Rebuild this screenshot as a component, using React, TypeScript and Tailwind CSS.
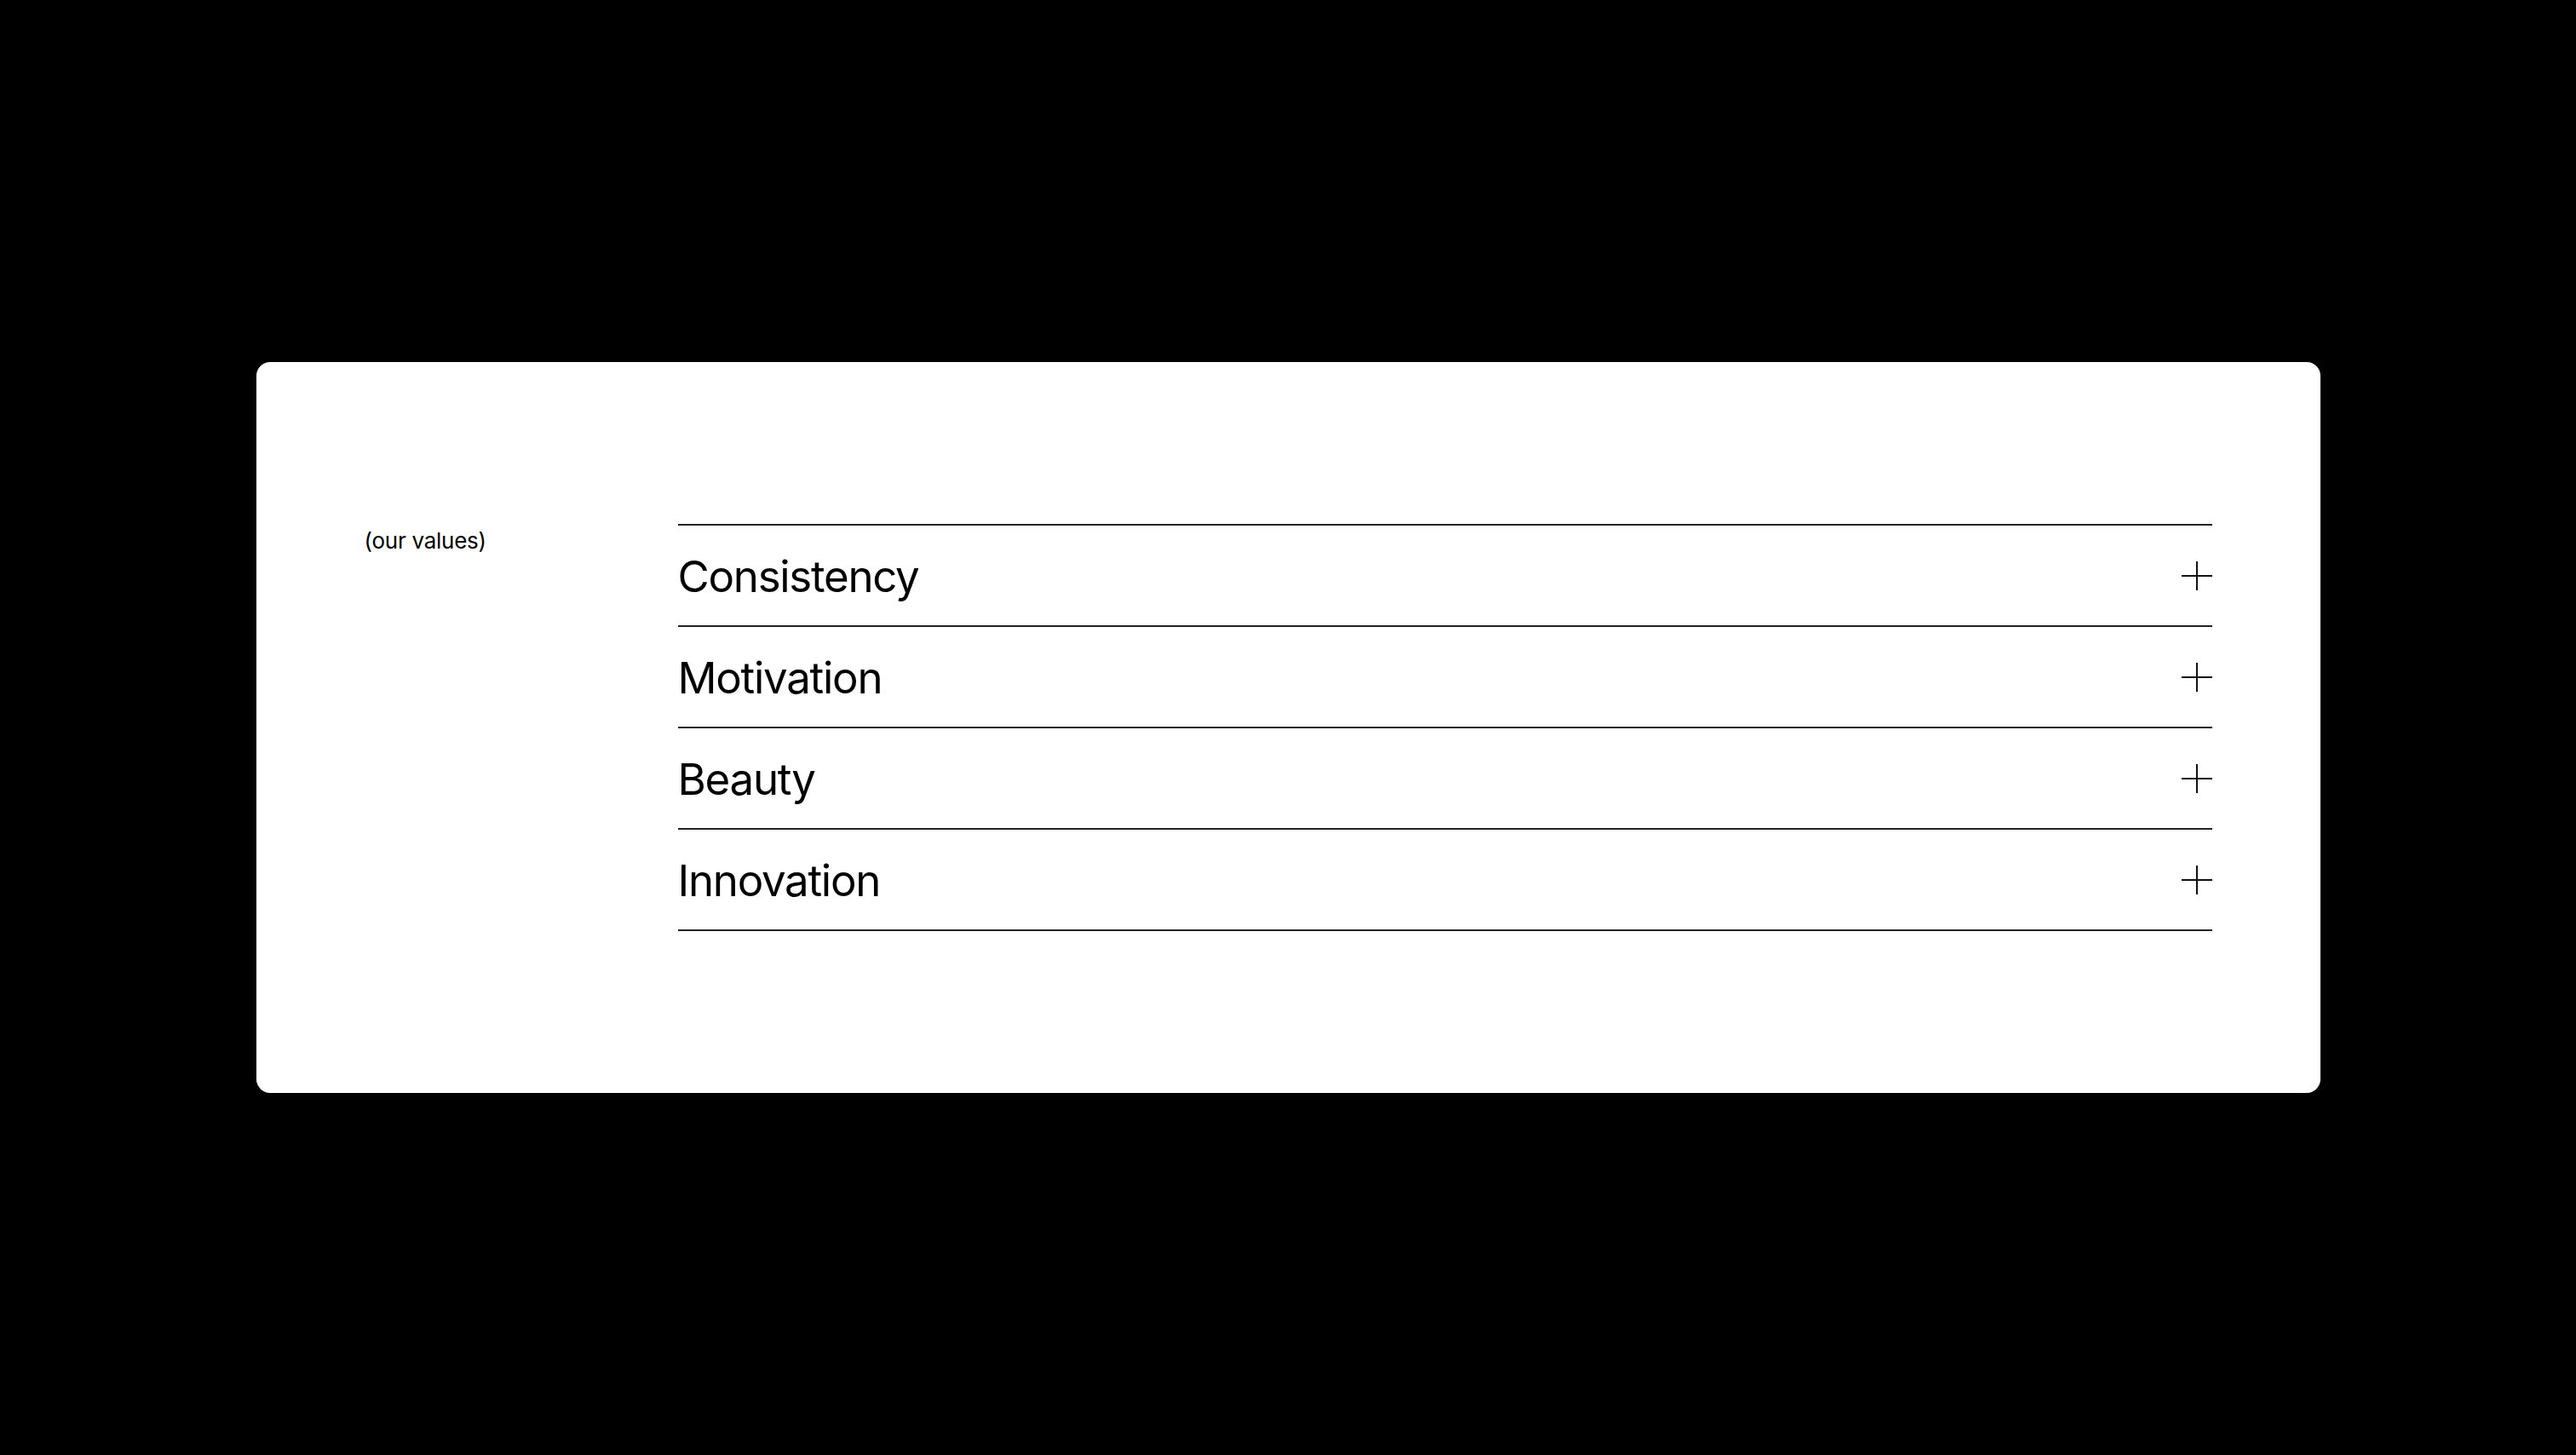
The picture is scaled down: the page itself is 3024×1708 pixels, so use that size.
import React from 'react';

const values = ['Consistency', 'Motivation', 'Beauty', 'Innovation'];

const PlusIcon = () => (
  <svg width="36" height="34" viewBox="0 0 36 34" fill="none" stroke="#111" strokeWidth="2">
    <line x1="0" y1="17" x2="36" y2="17" />
    <line x1="18" y1="0" x2="18" y2="34" />
  </svg>
);

const ValueRow = ({ title }: { title: string }) => (
  <div className="flex items-center justify-between h-[119px] border-b-2 border-[#222]">
    <span className="text-[51px] leading-none tracking-[-0.025em] text-black pt-[2px]">{title}</span>
    <PlusIcon />
  </div>
);

export default function App() {
  return (
    <div
      className="min-h-screen h-[1708px] w-full bg-black flex items-center justify-center"
      style={{ fontFamily: 'Inter, "Noto Sans", sans-serif' }}
    >
      <div className="w-[2423px] bg-white rounded-2xl px-[127px] py-[190px] flex">
        {/* section label */}
        <div className="w-[368px] shrink-0">
          <span className="text-[26px] leading-[40px] tracking-[-0.01em] text-black">(our values)</span>
        </div>

        {/* accordion list */}
        <div className="flex-1 border-t-2 border-[#222]">
          {values.map(v => (
            <ValueRow key={v} title={v} />
          ))}
        </div>
      </div>
    </div>
  );
}
